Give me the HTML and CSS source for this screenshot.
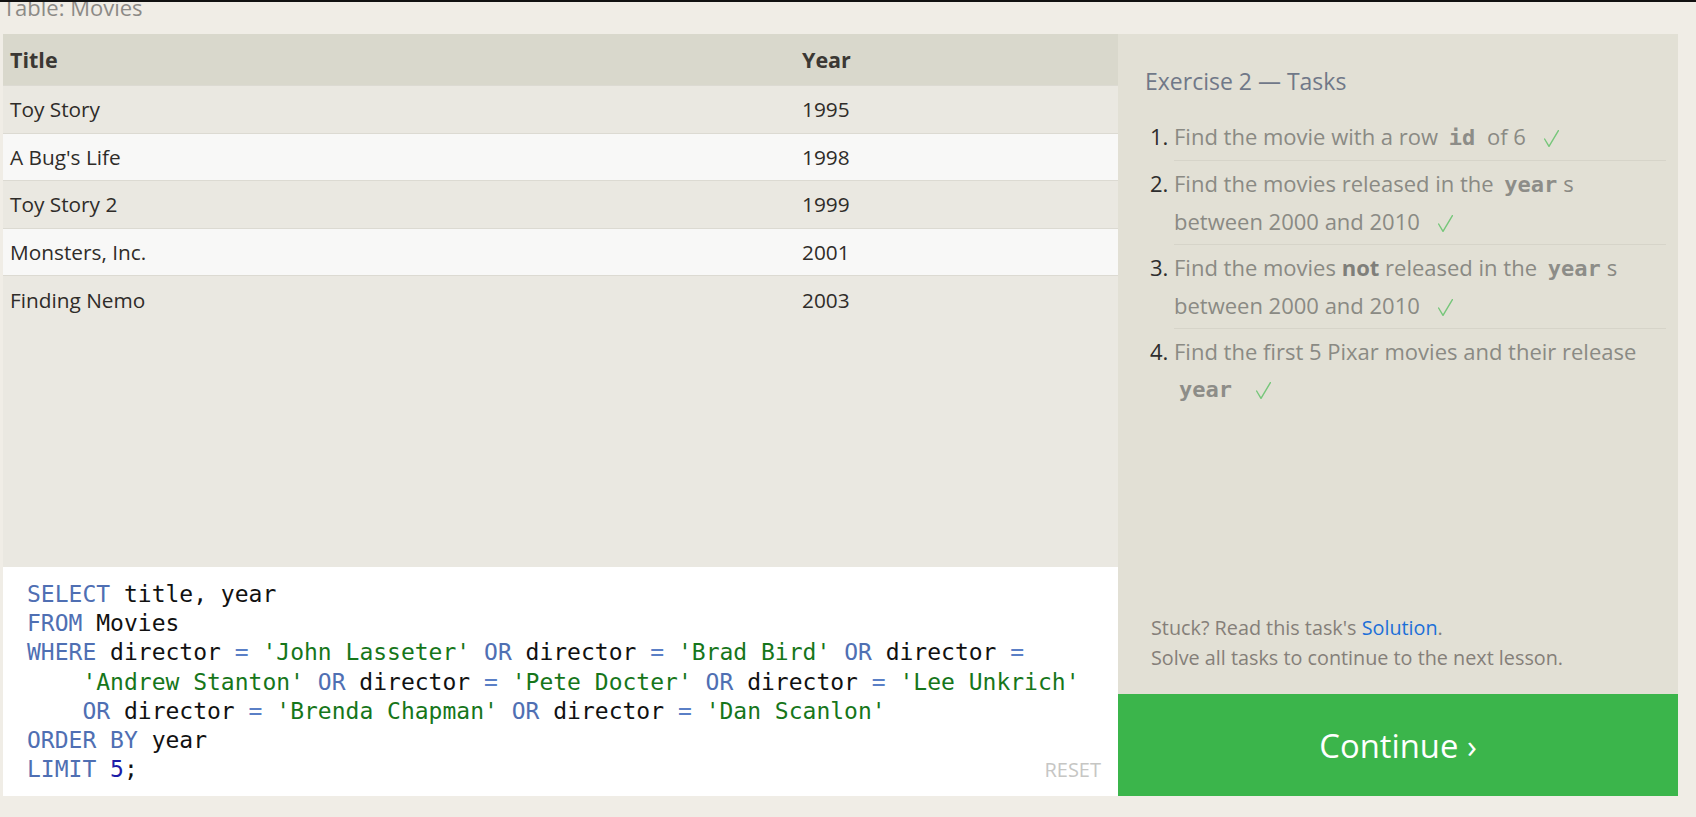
FILE: index.html
```html
<!DOCTYPE html>
<html lang="en">
<head>
<meta charset="utf-8">
<title>SQL Lesson — Exercise 2</title>
<link rel="stylesheet" href="styles.css">
</head>
<body>
<div class="page">
  <div class="caption"><span class="caption-text">Table: Movies</span></div>
  <div class="main">
    <section class="left">
      <div class="results">
        <div class="row head"><div class="cell">Title</div><div class="cell">Year</div></div>
        <div class="row"><div class="cell">Toy Story</div><div class="cell">1995</div></div>
        <div class="row"><div class="cell">A Bug's Life</div><div class="cell">1998</div></div>
        <div class="row"><div class="cell">Toy Story 2</div><div class="cell">1999</div></div>
        <div class="row"><div class="cell">Monsters, Inc.</div><div class="cell">2001</div></div>
        <div class="row"><div class="cell">Finding Nemo</div><div class="cell">2003</div></div>
      </div>
      <div class="editor">
<pre class="code"><span class="kw">SELECT</span> title, year
<span class="kw">FROM</span> Movies
<span class="kw">WHERE</span> director <span class="op">=</span> <span class="str">'John Lasseter'</span> <span class="kw">OR</span> director <span class="op">=</span> <span class="str">'Brad Bird'</span> <span class="kw">OR</span> director <span class="op">=</span>
    <span class="str">'Andrew Stanton'</span> <span class="kw">OR</span> director <span class="op">=</span> <span class="str">'Pete Docter'</span> <span class="kw">OR</span> director <span class="op">=</span> <span class="str">'Lee Unkrich'</span>
    <span class="kw">OR</span> director <span class="op">=</span> <span class="str">'Brenda Chapman'</span> <span class="kw">OR</span> director <span class="op">=</span> <span class="str">'Dan Scanlon'</span>
<span class="kw">ORDER BY</span> year
<span class="kw">LIMIT</span> <span class="num">5</span>;</pre>
        <span class="reset">RESET</span>
      </div>
    </section>
    <aside class="right">
      <div class="tasks">
        <h2 class="tasks-title">Exercise 2 — Tasks</h2>
        <ol class="task-list">
          <li>Find the movie with a row <code>id</code> of 6 <svg class="check" viewBox="0 0 15 17" width="15" height="17"><polyline points="0.6,9 5,16.3 14.4,0.6" /></svg></li>
          <li>Find the movies released in the <code>year</code>s between 2000 and 2010 <svg class="check" viewBox="0 0 15 17" width="15" height="17"><polyline points="0.6,9 5,16.3 14.4,0.6" /></svg></li>
          <li>Find the movies <strong>not</strong> released in the <code>year</code>s between 2000 and 2010 <svg class="check" viewBox="0 0 15 17" width="15" height="17"><polyline points="0.6,9 5,16.3 14.4,0.6" /></svg></li>
          <li>Find the first 5 Pixar movies and their release <code>year</code> <svg class="check" viewBox="0 0 15 17" width="15" height="17"><polyline points="0.6,9 5,16.3 14.4,0.6" /></svg></li>
        </ol>
      </div>
      <div class="help">
        <p>Stuck? Read this task's <a href="#">Solution</a>.</p>
        <p>Solve all tasks to continue to the next lesson.</p>
      </div>
      <a class="continue" href="#">Continue ›</a>
    </aside>
  </div>
</div>
</body>
</html>
```

FILE: styles.css
```css
html, body {
  margin: 0;
  padding: 0;
}

body {
  background: #f0ede6;
  font-family: "Open Sans", "Noto Sans", "DejaVu Sans", sans-serif;
  color: #2f2c29;
}

.page {
  border-top: 2px solid #111;
  padding-left: 3px;
}

.caption {
  height: 32px;
  overflow: hidden;
  font-size: 22px;
  color: #8c8a86;
}

.caption-text {
  display: block;
  line-height: 32px;
  margin-top: -11px;
}

.main {
  display: flex;
  height: 762px;
}

/* ---------- left: results + editor ---------- */
.left {
  width: 1115px;
  display: flex;
  flex-direction: column;
}

.results {
  flex: 1;
  background: #eae8e1;
}

.row {
  display: grid;
  grid-template-columns: 792px 1fr;
  align-items: center;
  height: 47.6px;
  box-sizing: border-box;
  border-top: 1px solid #dcdad2;
  font-size: 20.8px;
  color: #2f2c29;
}

.row:nth-child(odd) {
  background: #f8f8f7;
}

.row.head {
  height: 51px;
  border-top: 0;
  background: #d9d8cc;
  font-weight: 700;
  font-size: 21.5px;
  color: #3b3834;
}

.cell {
  padding-left: 7px;
}

.editor {
  position: relative;
  height: 229px;
  box-sizing: border-box;
  padding: 13px 0 0 24px;
  background: #fff;
}

.code {
  margin: 0;
  font-family: "DejaVu Sans Mono", "Liberation Mono", monospace;
  font-size: 23px;
  line-height: 29.2px;
  color: #111;
}

.kw { color: #4f6fb3; }
.op { color: #5a7fc6; }
.str { color: #16761a; }
.num { color: #1c1ca8; }

.reset {
  position: absolute;
  right: 17px;
  bottom: 14px;
  font-size: 20px;
  line-height: 24px;
  color: #c6c6c4;
}

/* ---------- right: tasks ---------- */
.right {
  width: 560px;
  display: flex;
  flex-direction: column;
  background: #e2e0d5;
}

.tasks {
  flex: 1;
  padding: 32px 12px 0 27px;
}

.tasks-title {
  margin: 0 0 17.5px;
  font-size: 23px;
  font-weight: 400;
  line-height: 30px;
  color: #707888;
}

.task-list {
  margin: 0;
  padding-left: 29px;
  list-style: decimal;
  font-size: 22px;
  color: #8a8a84;
}

.task-list li {
  padding: 4px 0;
  line-height: 37px;
  border-bottom: 1px solid #d6d4c9;
}

.task-list li:last-child {
  border-bottom: 0;
}

.task-list li::marker {
  color: #2d2d2d;
}

.task-list strong {
  color: #7f7f7a;
}

.task-list code {
  font-family: "DejaVu Sans Mono", "Liberation Mono", monospace;
  font-weight: 700;
  font-size: 22px;
  color: #8d8d88;
  padding: 0 6px 0 5px;
}

.check {
  margin-left: 12px;
  vertical-align: -2px;
  fill: none;
  stroke: #76c67a;
  stroke-width: 1.4;
  stroke-linecap: round;
  stroke-linejoin: round;
}

.help {
  padding: 0 20px 21px 33px;
  font-size: 19.8px;
  line-height: 30px;
  color: #857f79;
}

.help p {
  margin: 0;
}

.help a {
  color: #1c6fd8;
  text-decoration: none;
}

.continue {
  display: flex;
  align-items: center;
  justify-content: center;
  height: 102px;
  background: #3bb54b;
  color: #fff;
  font-size: 32.8px;
  text-decoration: none;
}
```
